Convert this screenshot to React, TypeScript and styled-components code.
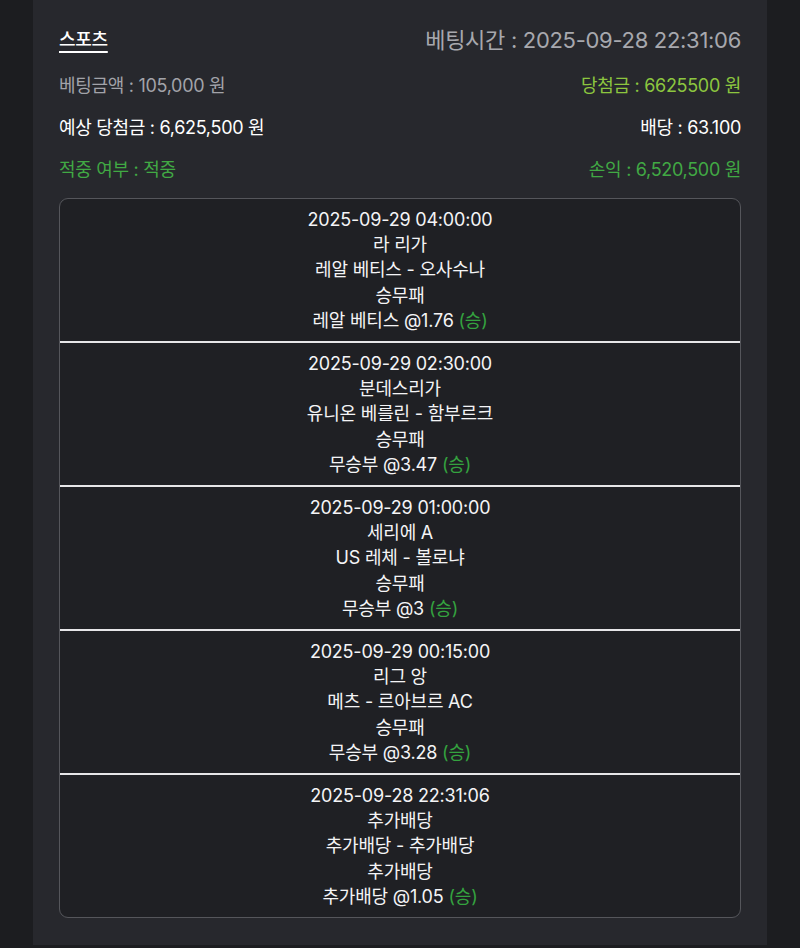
import React from 'react'
import styled, { createGlobalStyle } from 'styled-components'

const GlobalStyle = createGlobalStyle`
    html, body {
        margin: 0;
        padding: 0;
        background: #1c1d20;
    }
    body {
        font-family: Inter, "Noto Sans CJK KR", sans-serif;
        color: #f2f2f4;
    }
`

const Panel = styled.div`
    margin: 0 33px;
    padding: 20px 26px 27px;
    background: #27282d;
    min-height: 897px;
`

const HeaderRow = styled.div`
    display: flex;
    justify-content: space-between;
    align-items: center;
    height: 36px;
    margin-bottom: 7px;
`

const Title = styled.span`
    font-size: 18px;
    font-weight: 500;
    color: #ffffff;
    text-decoration: underline;
    text-underline-offset: 5px;
    text-decoration-thickness: 1.5px;
    letter-spacing: -0.3px;
`

const BetTime = styled.span`
    font-size: 22px;
    color: #a7a8ae;
    letter-spacing: -0.3px;
`

const InfoRow = styled.div`
    display: flex;
    justify-content: space-between;
    align-items: center;
    height: 42px;
`

const Info = styled.span<{ $tone?: 'muted' | 'white' | 'lime' | 'green' }>`
    font-size: 18px;
    letter-spacing: -0.3px;
    color: ${({ $tone }) =>
        $tone === 'muted' ? '#a2a3a9'
            : $tone === 'lime' ? '#8cc63f'
                : $tone === 'green' ? '#41a944'
                    : '#ffffff'};
`

const GameBox = styled.div`
    margin-top: 9px;
    border: 1.5px solid #55565b;
    border-radius: 9px;
    background: #1f2024;
    overflow: hidden;
`

const Game = styled.div`
    padding: 8px 0 8px;
    text-align: center;
    font-size: 18px;
    line-height: 25.2px;
    letter-spacing: -0.2px;
    color: #f4f4f6;
    & + & {
        border-top: 2px solid #e6e6e8;
    }
`

const Result = styled.span`
    color: #34a23f;
`

const games = [
    { time: '2025-09-29 04:00:00', league: '라 리가', match: '레알 베티스 - 오사수나', market: '승무패', pick: '레알 베티스 @1.76' },
    { time: '2025-09-29 02:30:00', league: '분데스리가', match: '유니온 베를린 - 함부르크', market: '승무패', pick: '무승부 @3.47' },
    { time: '2025-09-29 01:00:00', league: '세리에 A', match: 'US 레체 - 볼로냐', market: '승무패', pick: '무승부 @3' },
    { time: '2025-09-29 00:15:00', league: '리그 앙', match: '메츠 - 르아브르 AC', market: '승무패', pick: '무승부 @3.28' },
    { time: '2025-09-28 22:31:06', league: '추가배당', match: '추가배당 - 추가배당', market: '추가배당', pick: '추가배당 @1.05' },
]

export default function App() {
    return (
        <>
            <GlobalStyle />
            <Panel>
                <HeaderRow>
                    <Title>스포츠</Title>
                    <BetTime>베팅시간 : 2025-09-28 22:31:06</BetTime>
                </HeaderRow>
                <InfoRow>
                    <Info $tone="muted">베팅금액 : 105,000 원</Info>
                    <Info $tone="lime">당첨금 : 6625500 원</Info>
                </InfoRow>
                <InfoRow>
                    <Info $tone="white">예상 당첨금 : 6,625,500 원</Info>
                    <Info $tone="white">배당 : 63.100</Info>
                </InfoRow>
                <InfoRow>
                    <Info $tone="green">적중 여부 : 적중</Info>
                    <Info $tone="green">손익 : 6,520,500 원</Info>
                </InfoRow>
                <GameBox>
                    {games.map((g) => (
                        <Game key={g.time}>
                            <div>{g.time}</div>
                            <div>{g.league}</div>
                            <div>{g.match}</div>
                            <div>{g.market}</div>
                            <div>{g.pick} <Result>(승)</Result></div>
                        </Game>
                    ))}
                </GameBox>
            </Panel>
        </>
    )
}
